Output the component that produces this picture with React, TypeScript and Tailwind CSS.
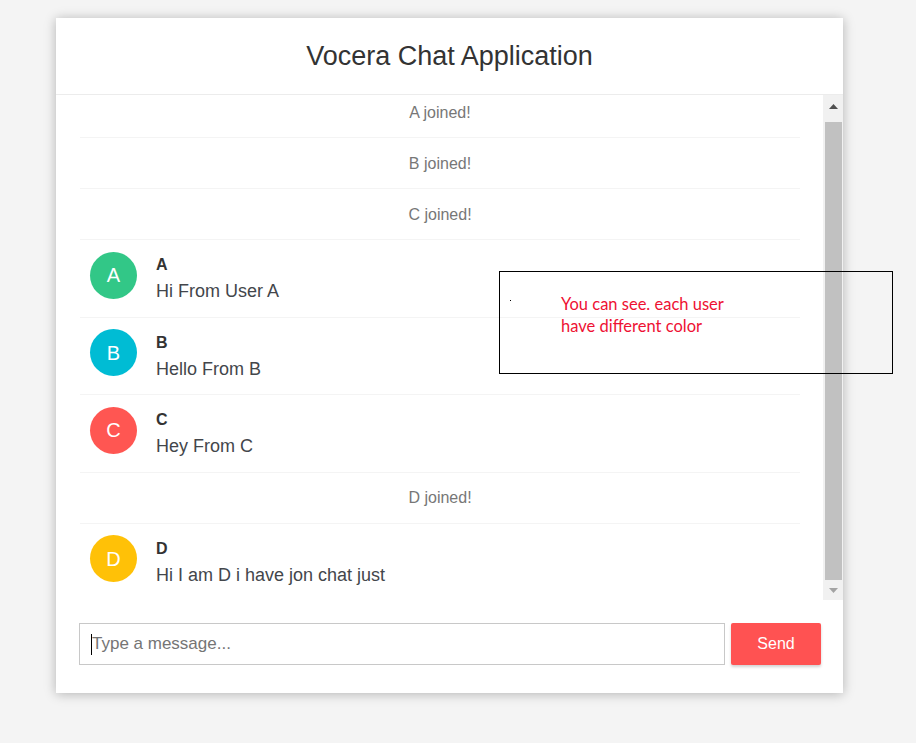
import React from "react";

type Item =
  | { kind: "event"; text: string }
  | { kind: "chat"; name: string; text: string; color: string };

const items: Item[] = [
  { kind: "event", text: "A joined!" },
  { kind: "event", text: "B joined!" },
  { kind: "event", text: "C joined!" },
  { kind: "chat", name: "A", text: "Hi From User A", color: "bg-[#32c787]" },
  { kind: "chat", name: "B", text: "Hello From B", color: "bg-[#00bcd4]" },
  { kind: "chat", name: "C", text: "Hey From C", color: "bg-[#ff5652]" },
  { kind: "event", text: "D joined!" },
  { kind: "chat", name: "D", text: "Hi I am D i have jon chat just", color: "bg-[#ffc107]" },
];

const EventRow: React.FC<{ text: string; first?: boolean }> = ({ text, first }) => (
  <li
    className={
      "border-b border-[#f4f4f4] py-[11.5px] text-center text-[16px] leading-[27px] text-[#777]" +
      (first ? " -mt-[8px]" : "")
    }
  >
    {text}
  </li>
);

const ChatRow: React.FC<{ name: string; text: string; color: string }> = ({ name, text, color }) => (
  <li className="relative border-b border-[#f4f4f4] py-[11.25px] pl-[76px] pr-[22px]">
    <i
      className={`absolute left-[10px] top-[11.5px] flex h-[47px] w-[47px] items-center justify-center rounded-full text-[20px] not-italic text-white ${color}`}
    >
      {name}
    </i>
    <span className="block text-[16px] font-bold leading-[27px] text-[#333]">{name}</span>
    <p className="text-[18px] leading-[27px] text-[#43464b]">{text}</p>
  </li>
);

const Scrollbar: React.FC = () => (
  <div className="flex w-[20px] flex-col bg-[#f1f1f1]">
    <div className="flex h-[27px] items-start justify-center pt-[9px]">
      <svg width="9" height="5" viewBox="0 0 9 5">
        <polygon points="4.5,0 9,5 0,5" fill="#505050" />
      </svg>
    </div>
    <div className="ml-[2px] mr-[1px] flex-1 bg-[#c1c1c1]" />
    <div className="flex h-[20px] items-start justify-center pt-[8px]">
      <svg width="9" height="5" viewBox="0 0 9 5">
        <polygon points="0,0 9,0 4.5,5" fill="#a3a3a3" />
      </svg>
    </div>
  </div>
);

export default function App() {
  return (
    <div
      className="relative min-h-[743px] bg-[#f4f4f4] pt-[18px]"
      style={{ fontFamily: '"Liberation Sans", Arial, sans-serif' }}
    >
      <div className="ml-[56px] flex h-[675px] w-[787px] flex-col bg-white shadow-[0_1px_11px_rgba(0,0,0,0.27)]">
        <div className="flex h-[77px] shrink-0 items-center justify-center border-b border-[#ececec] pt-[1px]">
          <h2 className="text-[27px] font-normal text-[#333]">Vocera Chat Application</h2>
        </div>

        <div className="flex h-[505px] shrink-0">
          <ul className="flex-1 overflow-hidden pl-[24px] pr-[23px]">
            {items.map((it, i) =>
              it.kind === "event" ? (
                <EventRow key={i} text={it.text} first={i === 0} />
              ) : (
                <ChatRow key={i} name={it.name} text={it.text} color={it.color} />
              )
            )}
          </ul>
          <Scrollbar />
        </div>

        <form className="flex gap-[6px] pl-[23px] pr-[22px] pt-[23px]" onSubmit={(e) => e.preventDefault()}>
          <div className="relative flex-1">
            <input
              type="text"
              placeholder="Type a message..."
              className="h-[42px] w-full border border-[#c8c8c8] pl-[12px] text-[17px] text-[#333] outline-none placeholder:text-[#757575]"
            />
            <span className="absolute left-[12px] top-[11px] h-[21px] w-px bg-black" />
          </div>
          <button
            type="submit"
            className="h-[42px] w-[90px] rounded-[2px] bg-[#ff5252] text-[16px] text-white shadow-[0_2px_3px_rgba(0,0,0,0.18)]"
          >
            Send
          </button>
        </form>
      </div>

      <div className="absolute left-[499px] top-[271px] h-[103px] w-[394px] border border-black">
        <span className="absolute left-[10px] top-[28px] h-px w-px bg-black" />
        <p
          className="pl-[61px] pt-[21px] text-[16.5px] leading-[22px] text-[#ee1133]"
          style={{ fontFamily: 'Lato, "Open Sans", sans-serif' }}
        >
          You can see. each user
          <br />
          have different color
        </p>
      </div>
    </div>
  );
}
